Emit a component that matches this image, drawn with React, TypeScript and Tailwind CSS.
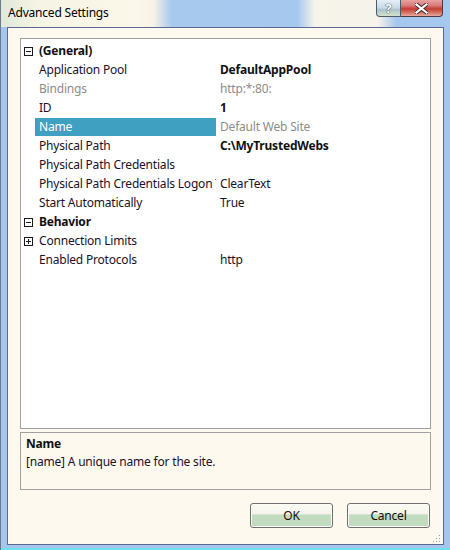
const rows: {
  kind: "cat" | "prop";
  label: string;
  value?: string;
  bold?: boolean;
  dim?: boolean;
  selected?: boolean;
  expand?: "minus" | "plus";
}[] = [
  { kind: "cat", label: "(General)", expand: "minus" },
  { kind: "prop", label: "Application Pool", value: "DefaultAppPool", bold: true },
  { kind: "prop", label: "Bindings", value: "http:*:80:", dim: true },
  { kind: "prop", label: "ID", value: "1", bold: true },
  { kind: "prop", label: "Name", value: "Default Web Site", dim: true, selected: true },
  { kind: "prop", label: "Physical Path", value: "C:\\MyTrustedWebs", bold: true },
  { kind: "prop", label: "Physical Path Credentials", value: "" },
  { kind: "prop", label: "Physical Path Credentials Logon Type", value: "ClearText" },
  { kind: "prop", label: "Start Automatically", value: "True" },
  { kind: "cat", label: "Behavior", expand: "minus" },
  { kind: "prop", label: "Connection Limits", value: "", expand: "plus" },
  { kind: "prop", label: "Enabled Protocols", value: "http" },
];

function ExpandBox({ type }: { type: "minus" | "plus" }) {
  return (
    <svg width="9" height="9" viewBox="0 0 9 9" className="block">
      <rect x="0.5" y="0.5" width="8" height="8" fill="white" stroke="#1a1a1a" />
      <line x1="2" y1="4.5" x2="7" y2="4.5" stroke="#1a1a1a" />
      {type === "plus" && <line x1="4.5" y1="2" x2="4.5" y2="7" stroke="#1a1a1a" />}
    </svg>
  );
}

function Row({ row }: { row: (typeof rows)[number] }) {
  return (
    <div className="flex h-[18px] mb-[1px] items-center">
      <div className="w-[14px] flex justify-center pl-[1px] shrink-0">
        {row.expand && <ExpandBox type={row.expand} />}
      </div>
      <div
        className={`w-[181px] shrink-0 h-full flex items-center pl-[4px] overflow-hidden whitespace-nowrap ${
          row.selected ? "bg-[#3fa0c1] text-white" : ""
        } ${row.kind === "cat" ? "font-bold text-[#111]" : row.dim ? "text-[#8c8c8c]" : "text-[#20102a]"}`}
      >
        {row.label}
      </div>
      {row.kind === "prop" && (
        <div
          className={`pl-[4px] whitespace-nowrap ${
            row.bold ? "font-bold text-[#111]" : row.dim ? "text-[#8c8c8c]" : "text-[#20102a]"
          }`}
        >
          {row.value}
        </div>
      )}
    </div>
  );
}

export default function App() {
  return (
    <div
      className="w-[450px] h-[550px] flex flex-col bg-[#a7c6ec] border-l border-[#6b7b8c] text-[12px] tracking-[-0.2px] overflow-hidden"
      style={{ fontFamily: '"Noto Sans", "Open Sans", sans-serif' }}
    >
      {/* title bar */}
      <div className="relative h-[27px] shrink-0 flex items-center pl-[7px] bg-[linear-gradient(90deg,#dfe8da_0%,#f6f4e4_8%,#fbf7ea_30%,#f7f3e6_34%,#a8c9ee_38%,#a6c8ee_66%,#f7f5ea_70%,#f5f3ea_84%,#a6c8ee_88%,#a6c8ee_100%)]">
        <span className="text-[12px] text-black leading-none pb-[1px]">Advanced Settings</span>
        <div className="absolute top-0 right-[7px] flex">
          <div className="w-[25px] h-[17px] flex items-center justify-center border border-t-0 border-[#4d5a6e] rounded-bl-[4px] bg-[linear-gradient(180deg,#e6eef6_0%,#c9d9e8_50%,#a9c2cf_60%,#d6e2c8_100%)]">
            <span className="text-white font-bold text-[13px] leading-none [text-shadow:0_0_1px_#333,0_0_1px_#333]">?</span>
          </div>
          <div className="w-[42px] h-[17px] flex items-center justify-center border border-t-0 border-l-0 border-[#4d3a3a] rounded-br-[4px] bg-[linear-gradient(180deg,#e9a2a2_0%,#d77a7a_35%,#c43c36_55%,#d26a5a_75%,#e8aaa0_100%)]">
            <svg width="13" height="11" viewBox="0 0 13 11">
              <path d="M1.5 1.5 L11.5 9.5 M11.5 1.5 L1.5 9.5" stroke="#3a2a2a" strokeWidth="4" strokeLinecap="square" />
              <path d="M1.5 1.5 L11.5 9.5 M11.5 1.5 L1.5 9.5" stroke="white" strokeWidth="2.2" strokeLinecap="square" />
            </svg>
          </div>
        </div>
      </div>

      {/* client area */}
      <div className="mx-[6px] h-[518px] shrink-0 border border-[#5b6795] bg-[#fdf9ef] flex flex-col px-[12px] pt-[10px]">
        <div className="h-[391px] border border-[#a0a0a0] bg-white pt-[3px]">
          {rows.map((r) => (
            <Row key={r.label} row={r} />
          ))}
        </div>
        <div className="mt-[3px] h-[58px] border border-[#a0a0a0] bg-[#fdf9ef] px-[5px] pt-[2px] text-[#20102a]">
          <div className="font-bold text-[#111] leading-[18px]">Name</div>
          <div className="leading-[18px]">[name] A unique name for the site.</div>
        </div>
        <div className="mt-[13px] flex justify-end gap-[14px] pr-[1px]">
          {["OK", "Cancel"].map((b) => (
            <div
              key={b}
              className="w-[83px] h-[25px] rounded-[3px] border border-[#707070] flex items-center justify-center text-[#111] bg-[linear-gradient(180deg,#fbfaf4_0%,#f6f4ec_45%,#c2dcc2_46%,#c0dbc0_100%)] shadow-[inset_0_0_0_1px_#fdfdf8]"
            >
              {b}
            </div>
          ))}
        </div>
        <div className="flex-1 flex items-end justify-end pb-[1px] -mr-[10px]">
          <svg width="9" height="9" viewBox="0 0 9 9">
            {[
              [7, 1],
              [4, 4],
              [7, 4],
              [1, 7],
              [4, 7],
              [7, 7],
            ].map(([x, y]) => (
              <rect key={`${x}-${y}`} x={x} y={y} width="1" height="1" fill="#9a9a9a" />
            ))}
          </svg>
        </div>
      </div>
      <div className="flex-1 border-b-2 border-[#6fe0f0]" />
    </div>
  );
}
